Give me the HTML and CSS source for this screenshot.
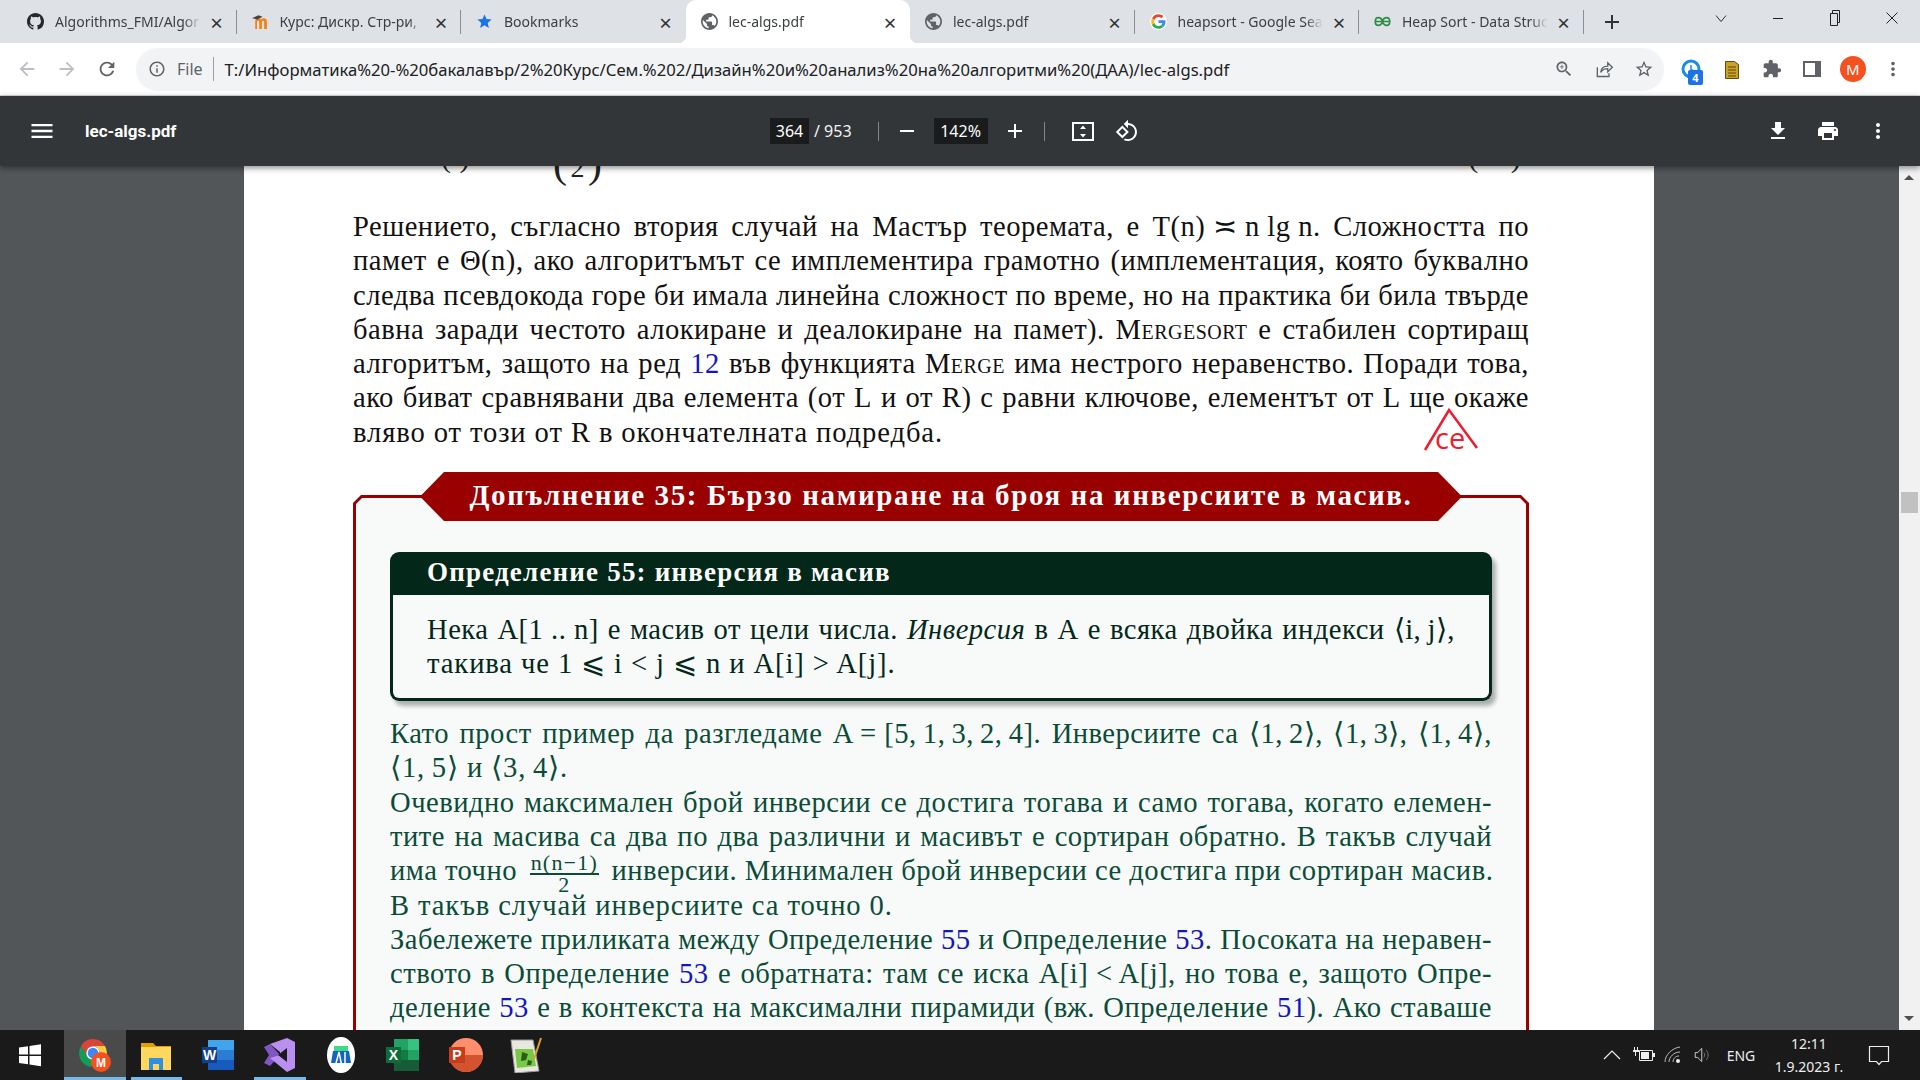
FILE: index.html
```html
<!DOCTYPE html>
<html>

<head>
  <meta charset="utf-8">
  <meta name="viewport" content="width=device-width">
  <title>lec-algs.pdf</title>
  <link rel="stylesheet" href="styles.css">
</head>

<body>
  <div class="tabstrip">
    <div class="tab sep">
      <svg class="fav" viewBox="0 0 16 16"><path fill="#24292e" d="M8 0C3.58 0 0 3.58 0 8c0 3.54 2.29 6.53 5.47 7.59.4.07.55-.17.55-.38 0-.19-.01-.82-.01-1.49-2.01.37-2.53-.49-2.69-.94-.09-.23-.48-.94-.82-1.13-.28-.15-.68-.52-.01-.53.63-.01 1.08.58 1.23.82.72 1.21 1.87.87 2.33.66.07-.52.28-.87.51-1.07-1.78-.2-3.64-.89-3.64-3.95 0-.87.31-1.59.82-2.15-.08-.2-.36-1.02.08-2.12 0 0 .67-.21 2.2.82.64-.18 1.32-.27 2-.27.68 0 1.36.09 2 .27 1.53-1.04 2.2-.82 2.2-.82.44 1.1.16 1.92.08 2.12.51.56.82 1.27.82 2.15 0 3.07-1.87 3.75-3.65 3.95.29.25.54.73.54 1.48 0 1.07-.01 1.93-.01 2.2 0 .21.15.46.55.38A8.013 8.013 0 0016 8c0-4.42-3.58-8-8-8z"/></svg>
      <span class="tab-title">Algorithms_FMI/Algor</span>
      <span class="tab-x">×</span>
    </div>
    <div class="tab sep">
      <svg class="fav" viewBox="0 0 16 16"><path fill="#f98012" d="M3 15V8c0-2 1-3 3-3 1 0 2 .5 2.500 1.300C9 5.500 10 5 11 5c2 0 3 1 3 3v7h-2.600V8.500c0-.8-.3-1.200-1-1.200s-1.100.4-1.100 1.200V15H6.800V8.500c0-.8-.4-1.200-1-1.200-.7 0-1.100.4-1.100 1.200V15z"/><path fill="#444" d="M0 5l6-3 4 1.500L5 6z"/></svg>
      <span class="tab-title">Курс: Дискр. Стр-ри,</span>
      <span class="tab-x">×</span>
    </div>
    <div class="tab">
      <svg class="fav" viewBox="0 0 24 24"><path fill="#1a73e8" d="M12 17.270L18.180 21l-1.640-7.030L22 9.240l-7.190-.61L12 2 9.190 8.630 2 9.240l5.460 4.730L5.820 21z"/></svg>
      <span class="tab-title">Bookmarks</span>
      <span class="tab-x">×</span>
    </div>
    <div class="tab active">
      <svg class="fav" viewBox="2 2 20 20"><path fill="#5f6368" d="M12 2C6.480 2 2 6.480 2 12s4.480 10 10 10 10-4.480 10-10S17.520 2 12 2zm-1 17.930c-3.950-.49-7-3.850-7-7.930 0-.62.08-1.210.21-1.790L9 15v1c0 1.100.9 2 2 2v1.930zm6.900-2.540c-.26-.81-1-1.390-1.900-1.390h-1v-3c0-.55-.45-1-1-1H8v-2h2c.55 0 1-.45 1-1V7h2c1.100 0 2-.9 2-2v-.41c2.930 1.190 5 4.060 5 7.410 0 2.080-.8 3.970-2.100 5.390z"/></svg>
      <span class="tab-title">lec-algs.pdf</span>
      <span class="tab-x">×</span>
    </div>
    <div class="tab sep">
      <svg class="fav" viewBox="2 2 20 20"><path fill="#5f6368" d="M12 2C6.480 2 2 6.480 2 12s4.480 10 10 10 10-4.480 10-10S17.520 2 12 2zm-1 17.930c-3.950-.49-7-3.850-7-7.930 0-.62.08-1.210.21-1.790L9 15v1c0 1.100.9 2 2 2v1.930zm6.900-2.540c-.26-.81-1-1.390-1.900-1.390h-1v-3c0-.55-.45-1-1-1H8v-2h2c.55 0 1-.45 1-1V7h2c1.100 0 2-.9 2-2v-.41c2.930 1.190 5 4.060 5 7.410 0 2.080-.8 3.970-2.100 5.390z"/></svg>
      <span class="tab-title">lec-algs.pdf</span>
      <span class="tab-x">×</span>
    </div>
    <div class="tab sep">
      <svg class="fav" viewBox="-4 -4 56 56"><circle cx="24" cy="24" r="28" fill="#fff"/><path fill="#EA4335" d="M24 9.500c3.540 0 6.710 1.220 9.210 3.600l6.850-6.850C35.900 2.380 30.470 0 24 0 14.620 0 6.510 5.380 2.560 13.220l7.980 6.190C12.430 13.720 17.740 9.500 24 9.500z"/><path fill="#4285F4" d="M46.980 24.550c0-1.570-.15-3.090-.38-4.550H24v9.020h12.940c-.58 2.960-2.260 5.480-4.780 7.180l7.730 6c4.510-4.180 7.090-10.360 7.090-17.650z"/><path fill="#FBBC05" d="M10.530 28.590c-.48-1.450-.76-2.990-.76-4.590s.27-3.140.76-4.590l-7.980-6.190C.92 16.460 0 20.120 0 24c0 3.880.92 7.540 2.560 10.780l7.970-6.190z"/><path fill="#34A853" d="M24 48c6.480 0 11.930-2.130 15.890-5.810l-7.730-6c-2.150 1.450-4.920 2.300-8.160 2.300-6.260 0-11.570-4.220-13.470-9.910l-7.980 6.190C6.510 42.620 14.620 48 24 48z"/></svg>
      <span class="tab-title">heapsort - Google Sea</span>
      <span class="tab-x">×</span>
    </div>
    <div class="tab sep">
      <svg class="fav" viewBox="0 0 20 12"><path fill="none" stroke="#2f8d46" stroke-width="2" d="M1 6h18M10 6C9 2.500 7 1.500 5 1.500S1.500 3.500 1.500 6 3 10.500 5 10.500 9 9.500 10 6c1 3.500 3 4.500 5 4.500s3.500-2 3.500-4.500S17 1.500 15 1.500 11 2.500 10 6z"/></svg>
      <span class="tab-title">Heap Sort - Data Struc</span>
      <span class="tab-x">×</span>
    </div>
    <div class="new-tab"><svg class="ico-18" viewBox="0 0 18 18"><path fill="#333" d="M8 2h2v6h6v2h-6v6H8v-6H2V8h6z"/></svg></div>
    <div class="win-controls">
      <div class="win-btn"><svg class="ico-12" viewBox="0 0 12 12"><path fill="none" stroke="#333" d="M1 3.500l5 6 5-6"/></svg></div>
      <div class="win-btn"><svg class="ico-12" viewBox="0 0 12 12"><path stroke="#222" d="M1 6.500h10"/></svg></div>
      <div class="win-btn"><svg class="ico-restore" viewBox="0 0 12 16"><path fill="none" stroke="#222" d="M1.500 3.500h7v12h-7zM3.500 3.500v-3h7v12h-2"/></svg></div>
      <div class="win-btn"><svg class="ico-12" viewBox="0 0 12 12"><path stroke="#222" d="M.5.500l11 11M11.500.500l-11 11"/></svg></div>
    </div>
  </div>

  <div class="toolbar">
    <div class="nav-btn"><svg class="ico-22" viewBox="0 0 24 24"><path fill="#bcbfc4" d="M20 11H7.830l5.590-5.590L12 4l-8 8 8 8 1.410-1.410L7.830 13H20v-2z"/></svg></div>
    <div class="nav-btn"><svg class="ico-22" viewBox="0 0 24 24"><path fill="#bcbfc4" d="M12 4l-1.410 1.410L16.170 11H4v2h12.170l-5.580 5.590L12 20l8-8z"/></svg></div>
    <div class="nav-btn"><svg class="ico-22" viewBox="0 0 24 24"><path fill="#5f6368" d="M17.650 6.350C16.200 4.900 14.210 4 12 4c-4.420 0-7.990 3.580-7.990 8s3.570 8 7.990 8c3.730 0 6.840-2.550 7.730-6h-2.080c-.82 2.330-3.040 4-5.650 4-3.310 0-6-2.690-6-6s2.690-6 6-6c1.660 0 3.140.69 4.220 1.780L13 11h7V4l-2.350 2.350z"/></svg></div>
    <div class="omnibox">
      <svg class="ico-18" viewBox="0 0 24 24"><path fill="#5f6368" d="M11 7h2v2h-2zm0 4h2v6h-2zm1-9C6.480 2 2 6.480 2 12s4.480 10 10 10 10-4.480 10-10S17.520 2 12 2zm0 18c-4.410 0-8-3.590-8-8s3.590-8 8-8 8 3.590 8 8-3.590 8-8 8z"/></svg>
      <span class="omni-file">File</span>
      <span class="omni-sep"></span>
      <span class="omni-url">T:/Информатика%20-%20бакалавър/2%20Курс/Сем.%202/Дизайн%20и%20анализ%20на%20алгоритми%20(ДАА)/lec-algs.pdf</span>
      <div class="omni-icons">
        <svg class="ico-20" viewBox="0 0 24 24"><path fill="#5f6368" d="M15.500 14h-.79l-.28-.27C15.410 12.590 16 11.110 16 9.500 16 5.910 13.090 3 9.500 3S3 5.910 3 9.500 5.910 16 9.500 16c1.610 0 3.090-.59 4.230-1.570l.27.28v.79l5 4.990L20.490 19l-4.990-5zm-6 0C7.010 14 5 11.990 5 9.500S7.010 5 9.500 5 14 7.010 14 9.500 11.990 14 9.500 14zM12 10h-2v2H9v-2H7V9h2V7h1v2h2v1z"/></svg>
        <svg class="ico-20" viewBox="0 0 24 24"><path fill="none" stroke="#5f6368" stroke-width="1.600" d="M4 10v11h14v-4M8 16c.5-5 4-7.500 8.500-7.500V4.500L22 10l-5.500 5.500v-4C13 11.500 10 13 8 16z"/></svg>
        <svg class="ico-20" viewBox="0 0 24 24"><path fill="#5f6368" d="M22 9.240l-7.190-.62L12 2 9.190 8.630 2 9.240l5.460 4.730L5.820 21 12 17.270 18.180 21l-1.630-7.030L22 9.240zM12 15.400l-3.760 2.270 1-4.280-3.320-2.880 4.380-.38L12 6.100l1.710 4.040 4.380.38-3.320 2.880 1 4.280L12 15.400z"/></svg>
      </div>
    </div>
    <div class="ext-row">
      <div class="ext-btn">
        <svg class="ico-20" viewBox="0 0 20 20"><circle cx="10" cy="10" r="8" fill="none" stroke="#1a8ce8" stroke-width="3"/><path fill="none" stroke="#1a8ce8" stroke-width="1.500" d="M10 6v4.500l3 1.500"/></svg>
        <span class="ext-badge">4</span>
      </div>
      <div class="ext-btn"><svg class="ico-22" viewBox="0 0 16 22"><path fill="#c9a227" stroke="#5c4a12" d="M1.500 3.500h9l4 3v14h-13z"/><path stroke="#5c4a12" d="M4 9h8M4 12h8M4 15h8M4 18h8"/></svg></div>
      <div class="ext-btn"><svg class="ico-20" viewBox="0 0 24 24"><path fill="#5f6368" d="M20.500 11H19V7c0-1.100-.9-2-2-2h-4V3.500C13 2.120 11.880 1 10.500 1S8 2.120 8 3.500V5H4c-1.100 0-1.990.9-1.990 2v3.800H3.500c1.490 0 2.700 1.210 2.700 2.700s-1.210 2.700-2.700 2.700H2V20c0 1.100.9 2 2 2h3.800v-1.500c0-1.490 1.210-2.700 2.700-2.700 1.490 0 2.700 1.210 2.700 2.700V22H17c1.100 0 2-.9 2-2v-4h1.500c1.380 0 2.500-1.120 2.500-2.500S21.880 11 20.500 11z"/></svg></div>
      <div class="ext-btn"><svg class="ico-18" viewBox="0 0 18 18"><path fill="none" stroke="#5f6368" stroke-width="2" d="M1 2h16v14H1z"/><path fill="#5f6368" d="M12 2h5v14h-5z"/></svg></div>
      <div class="ext-btn"><span class="avatar">M</span></div>
      <div class="ext-btn"><svg class="ico-22" viewBox="0 0 24 24"><path fill="#5f6368" d="M12 8c1.100 0 2-.9 2-2s-.9-2-2-2-2 .9-2 2 .9 2 2 2zm0 2c-1.100 0-2 .9-2 2s.9 2 2 2 2-.9 2-2-.9-2-2-2zm0 6c-1.100 0-2 .9-2 2s.9 2 2 2 2-.9 2-2-.9-2-2-2z"/></svg></div>
    </div>
  </div>

  <div class="viewer-bar">
    <div class="vb-left">
      <div class="vb-btn"><svg class="ico-26" viewBox="0 0 24 24"><path fill="#fff" d="M3 18h18v-2H3v2zm0-5h18v-2H3v2zm0-7v2h18V6H3z"/></svg></div>
      <span class="vb-title">lec-algs.pdf</span>
    </div>
    <div class="vb-center">
      <span class="page-input">364</span>
      <span class="page-total">/ 953</span>
      <span class="vb-sep"></span>
      <div class="vb-btn minus-btn"><svg class="ico-20" viewBox="0 0 20 20"><path fill="#fff" d="M3 9h14v2H3z"/></svg></div>
      <span class="zoom-input">142%</span>
      <div class="vb-btn plus-btn"><svg class="ico-20" viewBox="0 0 20 20"><path fill="#fff" d="M3 9h6V3h2v6h6v2h-6v6H9v-6H3z"/></svg></div>
      <span class="vb-sep"></span>
      <div class="vb-btn fit-btn"><svg class="ico-24" viewBox="0 0 24 24"><path fill="none" stroke="#fff" stroke-width="2" d="M2 4h20v17H2z"/><path fill="#fff" d="M12 6.500l3 3.500H9zM12 18.500L9 15h6z"/></svg></div>
      <div class="vb-btn rotate-btn"><svg class="ico-24" viewBox="0 0 24 24"><path fill="#fff" d="M7.340 6.410L.86 12.900l6.490 6.480 6.490-6.480-6.500-6.490zM3.690 12.900l3.660-3.660L11 12.900l-3.660 3.660-3.650-3.660zm15.670-6.260C17.610 4.880 15.300 4 13 4V.76L8.760 5 13 9.240V6c1.790 0 3.580.68 4.950 2.050 2.730 2.730 2.730 7.170 0 9.900C16.580 19.320 14.790 20 13 20c-.97 0-1.940-.21-2.840-.61l-1.490 1.490C10.020 21.620 11.510 22 13 22c2.300 0 4.610-.88 6.360-2.640 3.520-3.510 3.520-9.210 0-12.720z"/></svg></div>
    </div>
    <div class="vb-right">
      <div class="vb-btn"><svg class="ico-24" viewBox="0 0 24 24"><path fill="#fff" d="M19 9h-4V3H9v6H5l7 7 7-7zM5 18v2h14v-2H5z"/></svg></div>
      <div class="vb-btn"><svg class="ico-24" viewBox="0 0 24 24"><path fill="#fff" d="M19 8H5c-1.660 0-3 1.340-3 3v6h4v4h12v-4h4v-6c0-1.660-1.340-3-3-3zm-3 11H8v-5h8v5zm3-7c-.55 0-1-.45-1-1s.45-1 1-1 1 .45 1 1-.45 1-1 1zm-1-9H6v4h12V3z"/></svg></div>
      <div class="vb-btn"><svg class="ico-24" viewBox="0 0 24 24"><path fill="#fff" d="M12 8c1.100 0 2-.9 2-2s-.9-2-2-2-2 .9-2 2 .9 2 2 2zm0 2c-1.100 0-2 .9-2 2s.9 2 2 2 2-.9 2-2-.9-2-2-2zm0 6c-1.100 0-2 .9-2 2s.9 2 2 2 2-.9 2-2-.9-2-2-2z"/></svg></div>
    </div>
  </div>

  <div class="main">
    <div class="viewer">
      <div class="page">
        <div class="formula-cut">
          <span class="frag frag-a">( )</span>
          <span class="frag frag-b">(<small>2</small>)</span>
          <span class="frag frag-c">(&nbsp;&nbsp;&nbsp;&nbsp;)</span>
        </div>

        <div class="para">
          <div class="line">Решението, съгласно втория случай на Мастър теоремата, е <i class="m">T(n) ≍ n lg n</i>. Сложността по</div>
          <div class="line">памет е <i class="m">Θ(n)</i>, ако алгоритъмът се имплементира грамотно (имплементация, която буквално</div>
          <div class="line">следва псевдокода горе би имала линейна сложност по време, но на практика би била твърде</div>
          <div class="line">бавна заради честото алокиране и деалокиране на памет). <span class="sc">Mergesort</span> е стабилен сортиращ</div>
          <div class="line">алгоритъм, защото на ред <a class="ref">12</a> във функцията <span class="sc">Merge</span> има нестрого неравенство. Поради това,</div>
          <div class="line">ако биват сравнявани два елемента (от <i class="m">L</i> и от <i class="m">R</i>) с равни ключове, елементът от <i class="m">L</i> ще окаже</div>
          <div class="line last">вляво от този от <i class="m">R</i> в окончателната подредба.</div>
        </div>

        <svg class="caret-note" viewBox="0 0 60 44">
          <path fill="none" stroke="#ed1c2e" stroke-width="2.500" d="M1 42L25 2l28 38"/>
          <text x="11" y="41" class="caret-text">ce</text>
        </svg>

        <div class="addendum">
          <div class="banner">Допълнение 35: Бързо намиране на броя на инверсиите в масив.</div>
          <div class="frame">
            <div class="frame-fill">
              <div class="defbox">
                <div class="def-head">Определение 55: инверсия в масив</div>
                <div class="def-body">
                  <div class="line">Нека <i class="m">A[1 .. n]</i> е масив от цели числа. <em>Инверсия</em> в <i class="m">A</i> е всяка двойка индекси <i class="m">⟨i,&thinsp;j⟩</i>,</div>
                  <div class="line last">такива че <i class="m">1 ⩽ i &lt; j ⩽ n</i> и <i class="m">A[i] &gt; A[j]</i>.</div>
                </div>
              </div>
              <div class="notes">
                <div class="line">Като прост пример да разгледаме <i class="m">A = [5,&thinsp;1,&thinsp;3,&thinsp;2,&thinsp;4]</i>. Инверсиите са <i class="m">⟨1,&thinsp;2⟩</i>, <i class="m">⟨1,&thinsp;3⟩</i>, <i class="m">⟨1,&thinsp;4⟩</i>,</div>
                <div class="line last"><i class="m">⟨1,&thinsp;5⟩</i> и <i class="m">⟨3,&thinsp;4⟩</i>.</div>
                <div class="line">Очевидно максимален брой инверсии се достига тогава и само тогава, когато елемен-</div>
                <div class="line">тите на масива са два по два различни и масивът е сортиран обратно. В такъв случай</div>
                <div class="line">има точно <span class="frac"><span class="frac-top">n(n−1)</span><span class="frac-bot">2</span></span> инверсии. Минимален брой инверсии се достига при сортиран масив.</div>
                <div class="line last">В такъв случай инверсиите са точно 0.</div>
                <div class="line">Забележете приликата между Определение <a class="ref">55</a> и Определение <a class="ref">53</a>. Посоката на неравен-</div>
                <div class="line">ството в Определение <a class="ref">53</a> е обратната: там се иска <i class="m">A[i] &lt; A[j]</i>, но това е, защото Опре-</div>
                <div class="line">деление <a class="ref">53</a> е в контекста на максимални пирамиди (вж. Определение <a class="ref">51</a>). Ако ставаше</div>
              </div>
            </div>
          </div>
        </div>
      </div>
    </div>
    <div class="scrollbar">
      <span class="arrow-up"></span>
      <span class="thumb"></span>
      <span class="arrow-down"></span>
    </div>
  </div>

  <div class="taskbar">
    <div class="start"><svg class="ico-24" viewBox="0 0 24 24"><path fill="#fff" d="M1 4.500l9-1.300V11.500H1zM11.500 3l11.500-1.700V11.500H11.500zM1 13h9v8.300l-9-1.300zM11.500 13H23v10.200L11.500 21.500z"/></svg></div>
    <div class="task-cell open active">
      <svg class="task-ico" viewBox="0 0 36 36">
        <path fill="#db4437" d="M16 2a14 14 0 0 0-12 7l6 10a7 7 0 0 1 6-10h12a14 14 0 0 0-12-7z"/>
        <path fill="#0f9d58" d="M4 9a14 14 0 0 0 10 21l6-10a7 7 0 0 1-10-1z"/>
        <path fill="#ffcd40" d="M28 9H16a7 7 0 0 1 6 10l-6 11a14 14 0 0 0 12-21z"/>
        <circle cx="16" cy="16" r="6" fill="#4285f4" stroke="#fff" stroke-width="1.500"/>
        <circle cx="24" cy="25" r="10" fill="#f4511e"/>
        <text x="24" y="30" class="task-letter small">M</text>
      </svg>
    </div>
    <div class="task-cell open">
      <svg class="task-ico" viewBox="0 0 36 36">
        <path fill="#e0a100" d="M3 6h12l3 3h15v6H3z"/>
        <path fill="#ffd75e" d="M3 10h30v23H3z"/>
        <path fill="#2f8fe0" d="M11 21h14v12h-4v-6h-6v6h-4z"/>
      </svg>
    </div>
    <div class="task-cell">
      <svg class="task-ico" viewBox="0 0 36 36">
        <path fill="#41a5ee" d="M8 3h26v10H8z"/><path fill="#2b7cd3" d="M8 13h26v10H8z"/><path fill="#185abd" d="M8 23h26v10H8z"/>
        <path fill="#103f91" d="M2 10h15v16H2z"/>
        <text x="9.500" y="23" class="task-letter">W</text>
      </svg>
    </div>
    <div class="task-cell open">
      <svg class="task-ico" viewBox="0 0 36 36">
        <path fill="#7e57c2" d="M2 10l6-3 10 11-10 11-6-3 5-8z"/>
        <path fill="#b990f0" d="M8 7l17-6 8 4v26l-8 4-17-14 10-3-0-3z"/>
        <path fill="#1a1a1a" d="M25 11v14l-9-7z"/>
      </svg>
    </div>
    <div class="task-cell">
      <svg class="task-ico" viewBox="0 0 36 36">
        <ellipse cx="18" cy="18" rx="14" ry="18" fill="#fff"/>
        <path fill="#3ddc84" d="M11 9h14v5H11z"/>
        <path fill="#1565c0" d="M10 14h16l2 12H8z"/>
        <path fill="none" stroke="#fff" stroke-width="1.500" d="M12 30l4-15 3 15M22 15v15"/>
      </svg>
    </div>
    <div class="task-cell">
      <svg class="task-ico" viewBox="0 0 36 36">
        <path fill="#21a366" d="M9 2h14v11H9z"/><path fill="#33c481" d="M23 2h11v11H23z"/>
        <path fill="#107c41" d="M9 13h14v10H9z"/><path fill="#21a366" d="M23 13h11v10H23z"/>
        <path fill="#185c37" d="M9 23h25v11H9z"/>
        <path fill="#0e6b3a" d="M1 10h15v16H1z"/>
        <text x="8.500" y="23" class="task-letter">X</text>
      </svg>
    </div>
    <div class="task-cell">
      <svg class="task-ico" viewBox="0 0 36 36">
        <circle cx="19" cy="18" r="17" fill="#ff8f6b"/>
        <path fill="#d35230" d="M19 18h17a17 17 0 0 1-34 0z"/>
        <path fill="#c43e1c" d="M2 10h16v16H2z"/>
        <text x="10" y="23" class="task-letter">P</text>
      </svg>
    </div>
    <div class="task-cell">
      <svg class="task-ico" viewBox="0 0 36 36">
        <path fill="#e8e8e0" stroke="#999" d="M3 3h22l6 31-24 2z"/>
        <path fill="#7ac943" d="M7 12h18l3 17-19 2z"/>
        <path fill="#2c5c1a" d="M14 15l6 2-2 6-5 1zM20 23l4 1-1 4-4 0z"/>
        <path stroke="#e0a020" stroke-width="2" d="M26 22l7-21"/>
      </svg>
    </div>
    <div class="tray">
      <svg class="tray-ico" viewBox="0 0 18 18"><path fill="none" stroke="#eee" stroke-width="1.200" d="M1 13l8-8 8 8"/></svg>
      <svg class="tray-ico batt" viewBox="0 0 22 18"><path fill="none" stroke="#eee" d="M6.500 4.500h13v10h-13z"/><path fill="#eee" d="M8 6h8v7H8zM20 7h2v4h-2zM1 1h1v3H1zM4 1h1v3H4zM0 4h6v2H3v4H2V6H0z"/></svg>
      <svg class="tray-ico" viewBox="0 0 18 18"><path fill="none" stroke="#bbb" d="M1 16C1 9 8 2 16 1M5 16c0-5 5-10 11-10M9 16c0-3 2-6 6-6"/><circle cx="14" cy="15" r="2" fill="#eee"/></svg>
      <svg class="tray-ico" viewBox="0 0 22 18"><path fill="none" stroke="#eee" d="M1.500 6h3l5-5v16l-5-5h-3z"/><path fill="none" stroke="#888" d="M12 6c1.500 2 1.500 4 0 6M15 3c3 4 3 8 0 12"/></svg>
      <span class="tray-lang">ENG</span>
      <div class="clock"><span>12:11</span><span>1.9.2023 г.</span></div>
      <svg class="notif" viewBox="0 0 22 22"><path fill="none" stroke="#eee" stroke-width="1.200" d="M1.500 2.500h19v15h-7l-2.500 3-2.500-3h-7z"/></svg>
    </div>
  </div>
</body>

</html>
```
FILE: styles.css
```css
html {
  height: 100%;
  width: 100%;
}

body {
  margin: 0;
  height: 1080px;
  display: flex;
  flex-direction: column;
  overflow: hidden;
  font-family: "Noto Sans", Arial, sans-serif;
  background-color: #525659;
}

svg {
  display: block;
  flex: none;
}

.ico-12 { width: 12px; height: 12px; }
.ico-18 { width: 18px; height: 18px; }
.ico-20 { width: 20px; height: 20px; }
.ico-22 { width: 22px; height: 22px; }
.ico-24 { width: 24px; height: 24px; }
.ico-26 { width: 28px; height: 28px; }
.ico-restore { width: 12px; height: 16px; }

/* tab strip */
.tabstrip {
  display: flex;
  height: 43px;
  flex: none;
  padding-left: 12px;
  background-color: #dee1e6;
}

.tab {
  position: relative;
  display: flex;
  align-items: center;
  box-sizing: border-box;
  width: 224.5px;
  padding: 0 12px 0 15px;
  font-size: 14px;
  color: #3c4043;
}

.tab.sep::after {
  content: "";
  position: absolute;
  right: 0;
  top: 10px;
  bottom: 9px;
  width: 1px;
  background-color: #8a8d91;
}

.tab.active {
  background-color: #fff;
  border-radius: 10px 10px 0 0;
  color: #3c4043;
}

.tab.active::before,
.tab.active::after {
  content: "";
  position: absolute;
  bottom: 0;
  width: 8px;
  height: 8px;
}

.tab.active::before {
  left: -8px;
  background: radial-gradient(circle at 0 0, transparent 8px, #fff 8.5px);
}

.tab.active::after {
  right: -8px;
  background: radial-gradient(circle at 100% 0, transparent 8px, #fff 8.5px);
}

.fav {
  width: 17px;
  height: 17px;
}

.tab-title {
  flex: 1;
  margin-left: 11px;
  white-space: nowrap;
  overflow: hidden;
  -webkit-mask-image: linear-gradient(to right, #000 88%, transparent 100%);
  mask-image: linear-gradient(to right, #000 88%, transparent 100%);
}

.tab-x {
  width: 16px;
  margin-left: 8px;
  text-align: center;
  font-size: 22px;
  line-height: 1;
  color: #333;
}

.new-tab {
  display: flex;
  align-items: center;
  justify-content: center;
  width: 56px;
}

.win-controls {
  display: flex;
  margin-left: auto;
}

.win-btn {
  display: flex;
  align-items: center;
  justify-content: center;
  width: 57px;
  height: 36px;
}

/* address bar */
.toolbar {
  display: flex;
  align-items: center;
  flex: none;
  height: 52px;
  padding-left: 7px;
  background-color: #fff;
  border-bottom: 1px solid #dadce0;
}

.nav-btn {
  display: flex;
  align-items: center;
  justify-content: center;
  width: 40px;
}

.omnibox {
  display: flex;
  align-items: center;
  box-sizing: border-box;
  width: 1528px;
  height: 43px;
  margin-left: 9px;
  padding: 0 10px 0 12px;
  border-radius: 22px;
  background-color: #f1f3f4;
}

.omni-file {
  margin-left: 11px;
  font-size: 16px;
  color: #5f6368;
}

.omni-sep {
  width: 1px;
  height: 24px;
  margin: 0 11px 0 10px;
  background-color: #9aa0a6;
}

.omni-url {
  font-size: 16.650px;
  color: #202124;
  white-space: nowrap;
}

.omni-icons {
  display: flex;
  gap: 20px;
  margin-left: auto;
}

.ext-row {
  display: flex;
  margin-left: 7px;
}

.ext-btn {
  position: relative;
  display: flex;
  align-items: center;
  justify-content: center;
  width: 40.400px;
}

.ext-badge {
  position: absolute;
  left: 17px;
  top: 14px;
  width: 15px;
  height: 15px;
  border-radius: 2px;
  background-color: #1a73e8;
  color: #fff;
  font-size: 11px;
  font-weight: 700;
  line-height: 15px;
  text-align: center;
}

.avatar {
  width: 26px;
  height: 26px;
  border-radius: 50%;
  background-color: #f4511e;
  color: #fff;
  font-size: 15px;
  line-height: 26px;
  text-align: center;
}

/* pdf viewer bar */
.viewer-bar {
  position: relative;
  z-index: 2;
  display: grid;
  grid-template-columns: 770px 1fr auto;
  align-items: center;
  flex: none;
  height: 70px;
  background-color: #323639;
  color: #f1f3f4;
  box-shadow: 0 2px 6px rgba(0, 0, 0, 0.45);
}

.vb-left,
.vb-center,
.vb-right {
  display: flex;
  align-items: center;
}

.vb-left {
  padding-left: 26px;
}

.vb-right {
  gap: 18px;
  padding-right: 26px;
}

.vb-btn {
  display: flex;
  align-items: center;
  justify-content: center;
  width: 32px;
  height: 32px;
}

.vb-title {
  margin-left: 27px;
  font-family: Roboto, "Noto Sans", sans-serif;
  font-size: 17px;
  font-weight: 700;
  color: #fff;
}

.page-input,
.zoom-input {
  height: 26px;
  line-height: 26px;
  text-align: center;
  font-size: 16px;
  background-color: #191b1c;
  color: #fff;
}

.page-input { width: 39px; }
.zoom-input { width: 54px; margin-left: 11px; }

.page-total {
  margin-left: 5px;
  font-size: 16px;
}

.vb-sep {
  width: 1px;
  height: 19px;
  margin-left: 26px;
  background-color: #80868b;
}

.minus-btn { margin-left: 12px; }
.plus-btn { margin-left: 11px; }
.plus-btn + .vb-sep { margin-left: 13px; }
.fit-btn { margin-left: 22px; }
.rotate-btn { margin-left: 12px; }

/* document area */
.main {
  display: flex;
  flex: 1;
  min-height: 0;
}

.viewer {
  flex: 1;
  min-width: 0;
  overflow: hidden;
}

.page {
  position: relative;
  box-sizing: border-box;
  width: 1410px;
  min-height: 900px;
  margin-left: 244px;
  padding: 0 125px 0 109px;
  background-color: #fff;
  color: #111;
  font-family: "Liberation Serif", "Times New Roman", serif;
  font-size: 28.600px;
  letter-spacing: 0.480px;
}

.formula-cut {
  display: flex;
  align-items: flex-end;
  height: 20px;
  overflow: hidden;
  color: #222;
}

.frag {
  white-space: nowrap;
  line-height: 1;
}

.frag-a {
  margin: 0 0 14px 88px;
  font-size: 30px;
}

.frag-b {
  margin: 0 0 2px 83px;
  font-size: 42px;
}

.frag-b small {
  font-size: 28px;
  margin: 0 3px;
}

.frag-c {
  margin: 0 0 14px 866px;
  font-size: 30px;
}

.para {
  margin-top: 24px;
}

.line {
  height: 34.300px;
  line-height: 34.300px;
  text-align: justify;
  text-align-last: justify;
  white-space: nowrap;
}

.line.last {
  text-align-last: left;
  letter-spacing: 0.900px;
}

.m {
  display: inline-block;
  font-style: normal;
  text-align-last: left;
}

.sc {
  font-variant: small-caps;
}

.ref {
  color: #1616c0;
}

.caret-note {
  position: absolute;
  left: 1180px;
  top: 242px;
  width: 60px;
  height: 44px;
  overflow: visible;
}

.caret-text {
  font-family: "Open Sans", sans-serif;
  font-size: 29px;
  letter-spacing: 0;
  fill: #ed1c2e;
}

/* addendum box */
.addendum {
  margin-top: 22px;
}

.banner {
  position: relative;
  z-index: 1;
  box-sizing: border-box;
  width: 1042px;
  height: 49px;
  margin: 0 0 -26px 67px;
  background-color: #990000;
  clip-path: polygon(24px 0, calc(100% - 24px) 0, 100% 50%, calc(100% - 24px) 100%, 24px 100%, 0 50%);
  color: #fff;
  font-size: 29px;
  font-weight: 700;
  letter-spacing: 1.600px;
  line-height: 46px;
  text-align: center;
  white-space: nowrap;
}

.frame {
  padding: 3px 3px 0;
  background-color: #990000;
  clip-path: polygon(8px 0, calc(100% - 8px) 0, 100% 8px, 100% 100%, 0 100%, 0 8px);
}

.frame-fill {
  min-height: 620px;
  padding: 54px 34px 0;
  background-color: #f8fafa;
  clip-path: polygon(6px 0, calc(100% - 6px) 0, 100% 6px, 100% 100%, 0 100%, 0 6px);
}

.defbox {
  border-radius: 9px;
  box-shadow: 4px 5px 4px rgba(0, 0, 0, 0.3);
  background-color: #f8fafa;
}

.def-head {
  box-sizing: border-box;
  height: 43px;
  padding-left: 37px;
  border-radius: 9px 9px 0 0;
  background-color: #03281a;
  color: #fff;
  font-size: 27px;
  font-weight: 700;
  letter-spacing: 1.200px;
  line-height: 41px;
}

.def-body {
  box-sizing: border-box;
  height: 106px;
  padding: 18px 34px 0;
  border: 3px solid #03281a;
  border-top: 0;
  border-radius: 0 0 9px 9px;
  color: #03281a;
}

.notes {
  margin-top: 16px;
  color: #0b4c38;
}

.frac {
  display: inline-flex;
  flex-direction: column;
  align-items: center;
  vertical-align: middle;
  margin: -12px 5px;
  font-size: 22px;
  line-height: 20px;
  letter-spacing: 1.200px;
  text-align-last: center;
}

.frac-top {
  border-bottom: 2px solid #0b4c38;
  padding: 0 1px;
}

/* scrollbar */
.scrollbar {
  position: relative;
  flex: none;
  width: 21px;
  background-color: #f1f1f1;
}

.arrow-up,
.arrow-down {
  position: absolute;
  left: 5px;
  border-left: 5px solid transparent;
  border-right: 5px solid transparent;
}

.arrow-up {
  top: 9px;
  border-bottom: 5px solid #505050;
}

.arrow-down {
  bottom: 9px;
  border-top: 5px solid #505050;
}

.thumb {
  position: absolute;
  left: 2px;
  top: 326px;
  width: 17px;
  height: 21px;
  background-color: #c1c1c1;
}

/* windows taskbar */
.taskbar {
  position: relative;
  z-index: 2;
  display: flex;
  align-items: stretch;
  flex: none;
  height: 50px;
  background-color: #1a1a1a;
}

.start {
  display: flex;
  align-items: center;
  justify-content: center;
  width: 64px;
  padding-right: 4px;
  box-sizing: border-box;
}

.task-cell {
  position: relative;
  display: flex;
  align-items: center;
  justify-content: center;
  width: 61.670px;
}

.task-cell.open::after {
  content: "";
  position: absolute;
  left: 5px;
  right: 5px;
  bottom: 0;
  height: 3px;
  background-color: #76b9ed;
}

.task-cell.active {
  background-color: #4a4a4a;
}

.task-cell.active::after {
  left: 0;
  right: 0;
}

.task-ico {
  width: 36px;
  height: 36px;
}

.task-letter {
  font-family: "Liberation Sans", sans-serif;
  font-size: 14px;
  font-weight: 700;
  fill: #fff;
  text-anchor: middle;
}

.task-letter.small {
  font-size: 12px;
}

.tray {
  display: flex;
  align-items: center;
  margin-left: auto;
  color: #eee;
}

.tray-ico {
  width: 18px;
  height: 18px;
  margin-right: 12px;
}

.tray-ico.batt {
  width: 22px;
  margin-right: 9px;
}

.tray-lang {
  margin-left: -5px;
  width: 44px;
  text-align: center;
  font-size: 14px;
}

.clock {
  display: flex;
  flex-direction: column;
  align-items: center;
  gap: 4px;
  width: 88px;
  margin-left: 2px;
  font-size: 14px;
  line-height: 19px;
}

.notif {
  width: 22px;
  height: 22px;
  margin: 0 30px 0 15px;
}
```
